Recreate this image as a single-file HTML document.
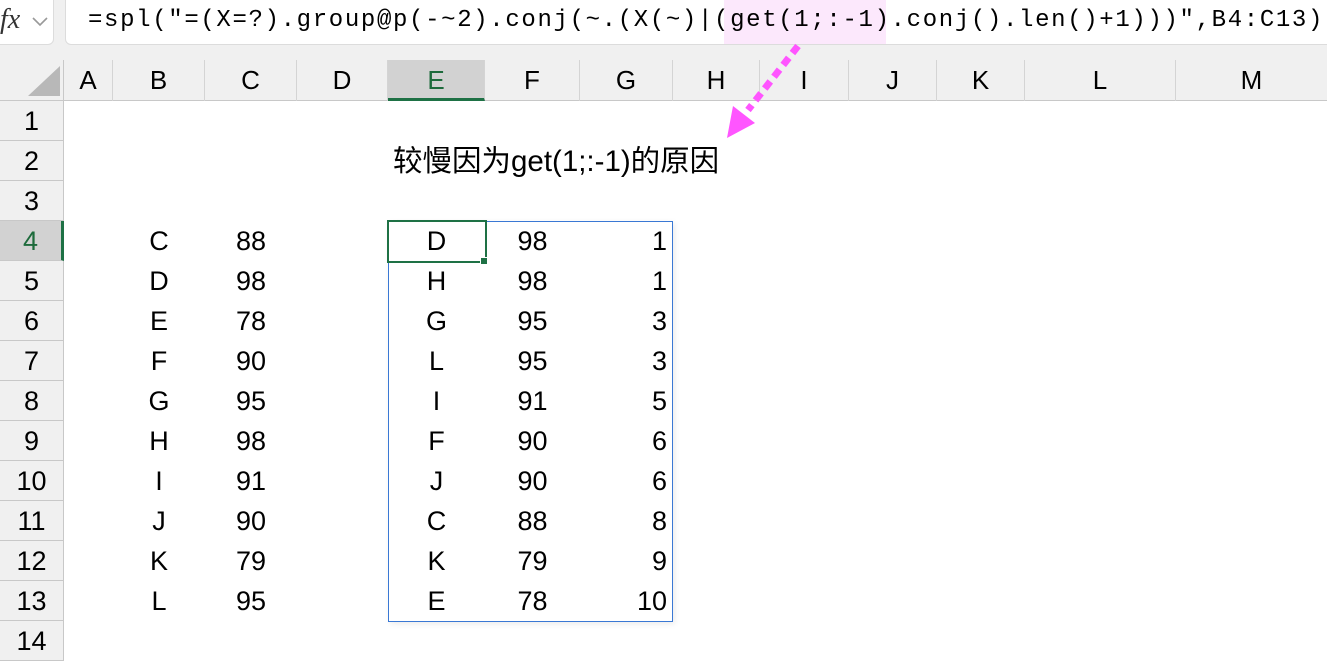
<!DOCTYPE html>
<html><head><meta charset="utf-8"><style>
*{margin:0;padding:0;box-sizing:border-box}
body{width:1327px;height:659px;overflow:hidden;background:#fff;position:relative;font-family:"Liberation Sans","Noto Sans CJK SC",sans-serif;color:#000}
.a{position:absolute}
.fb{left:0;top:0;width:1327px;height:60px;background:#f0f0f0}
.box{background:#fff;border:1px solid #dcdcdc;border-radius:6px;top:-6px;height:51px}
.ch{top:60px;height:41px;font-size:26px;line-height:41px;text-align:center;border-right:1px solid #d4d4d4}
.rh{left:0;width:64px;height:40px;background:#f0f0f0;border-bottom:1px solid #c8c8c8;border-right:1px solid #c8c8c8;font-size:27px;line-height:40px;text-align:center}
.c{font-size:27px;line-height:40px;height:40px;text-align:center}
.hdr{top:60px;height:41px;background:#f0f0f0;border-bottom:1px solid #c8c8c8}
</style></head><body>
<div class="a fb"></div>
<div class="a box" style="left:-10px;width:64px"></div>
<div class="a" style="left:0;top:4px;font-family:'Liberation Serif',serif;font-style:italic;font-size:28px;color:#333">fx</div>
<svg class="a" style="left:31px;top:16px" width="18" height="12"><path d="M2 2 L9 9 L16 2" fill="none" stroke="#999" stroke-width="1.6"/></svg>
<div class="a box" style="left:65px;width:1280px"></div>
<div class="a" style="left:724px;top:0;width:162px;height:44px;background:#fce8fc"></div>
<div class="a" style="left:88px;top:7px;font-family:'Liberation Mono','DejaVu Sans Mono',monospace;font-size:24px;letter-spacing:1.65px;white-space:nowrap">=spl("=(X=?).group@p(-~2).conj(~.(X(~)|(get(1;:-1).conj().len()+1)))",B4:C13)</div>
<div class="a hdr" style="left:0;width:1327px"></div>
<div class="a" style="left:0;top:60px;width:64px;height:41px;border-right:1px solid #c8c8c8"></div>
<svg class="a" style="left:26px;top:64px" width="36" height="34"><path d="M34 2 L34 32 L2 32 Z" fill="#b8b8b8"/></svg>
<div class="a ch" style="left:64px;width:49px">A</div>
<div class="a ch" style="left:113px;width:92px">B</div>
<div class="a ch" style="left:205px;width:92px">C</div>
<div class="a ch" style="left:297px;width:91px">D</div>
<div class="a ch" style="left:388px;width:97px;background:#d2d2d2;color:#1e6b3c;border-bottom:3px solid #1e7145">E</div>
<div class="a ch" style="left:485px;width:95px">F</div>
<div class="a ch" style="left:580px;width:93px">G</div>
<div class="a ch" style="left:673px;width:87px">H</div>
<div class="a ch" style="left:760px;width:89px">I</div>
<div class="a ch" style="left:849px;width:88px">J</div>
<div class="a ch" style="left:937px;width:88px">K</div>
<div class="a ch" style="left:1025px;width:151px">L</div>
<div class="a ch" style="left:1176px;width:151px;border-right:none">M</div>

<div class="a rh" style="top:101px">1</div>
<div class="a rh" style="top:141px">2</div>
<div class="a rh" style="top:181px">3</div>
<div class="a rh" style="top:221px;background:#d2d2d2;color:#1e6b3c;border-right:3px solid #1e7145">4</div>
<div class="a rh" style="top:261px">5</div>
<div class="a rh" style="top:301px">6</div>
<div class="a rh" style="top:341px">7</div>
<div class="a rh" style="top:381px">8</div>
<div class="a rh" style="top:421px">9</div>
<div class="a rh" style="top:461px">10</div>
<div class="a rh" style="top:501px">11</div>
<div class="a rh" style="top:541px">12</div>
<div class="a rh" style="top:581px">13</div>
<div class="a rh" style="top:621px">14</div>

<div class="a" style="left:393px;top:145px;font-size:29.5px;line-height:34px;white-space:nowrap">较慢因为get(1;:-1)的原因</div>

<div class="a" style="left:388px;top:221px;width:285px;height:401px;border:1px solid #3a78d4;box-shadow:2px 2px 6px rgba(0,0,0,0.08)"></div>

<div class="a" style="left:113px;top:221px;width:92px">
<div class="c">C</div><div class="c">D</div><div class="c">E</div><div class="c">F</div><div class="c">G</div><div class="c">H</div><div class="c">I</div><div class="c">J</div><div class="c">K</div><div class="c">L</div></div>
<div class="a" style="left:205px;top:221px;width:92px">
<div class="c">88</div><div class="c">98</div><div class="c">78</div><div class="c">90</div><div class="c">95</div><div class="c">98</div><div class="c">91</div><div class="c">90</div><div class="c">79</div><div class="c">95</div></div>
<div class="a" style="left:388px;top:221px;width:97px">
<div class="c">D</div><div class="c">H</div><div class="c">G</div><div class="c">L</div><div class="c">I</div><div class="c">F</div><div class="c">J</div><div class="c">C</div><div class="c">K</div><div class="c">E</div></div>
<div class="a" style="left:485px;top:221px;width:95px">
<div class="c">98</div><div class="c">98</div><div class="c">95</div><div class="c">95</div><div class="c">91</div><div class="c">90</div><div class="c">90</div><div class="c">88</div><div class="c">79</div><div class="c">78</div></div>
<div class="a" style="left:580px;top:221px;width:87px">
<div class="c" style="text-align:right">1</div><div class="c" style="text-align:right">1</div><div class="c" style="text-align:right">3</div><div class="c" style="text-align:right">3</div><div class="c" style="text-align:right">5</div><div class="c" style="text-align:right">6</div><div class="c" style="text-align:right">6</div><div class="c" style="text-align:right">8</div><div class="c" style="text-align:right">9</div><div class="c" style="text-align:right">10</div></div>

<div class="a" style="left:387px;top:220px;width:100px;height:43px;border:2.5px solid #1e7145"></div>
<div class="a" style="left:480px;top:257px;width:8px;height:8px;background:#1e7145;border:1px solid #fff"></div>

<svg class="a" style="left:0;top:0" width="1327" height="659">
<line x1="798" y1="46" x2="748" y2="110" stroke="#ff55ff" stroke-width="7" stroke-dasharray="9 6"/>
<path d="M727 138 L733 106 L755 123 Z" fill="#ff55ff"/>
</svg>
</body></html>
